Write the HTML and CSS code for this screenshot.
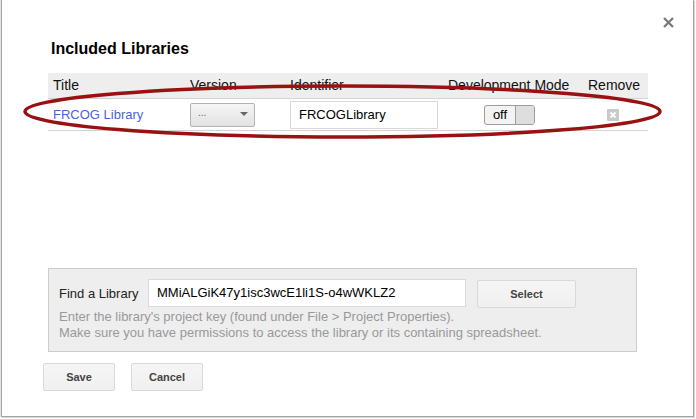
FILE: index.html
```html
<!DOCTYPE html>
<html>
<head>
<meta charset="utf-8">
<link rel="stylesheet" href="styles.css">
</head>
<body>
<div class="dialog">
  <button class="close" aria-label="Close">
    <svg width="11" height="11" viewBox="0 0 11 11"><path d="M1 1L10 10M10 1L1 10" stroke="#777" stroke-width="2.2" fill="none"/></svg>
  </button>
  <div class="content">
    <h2 class="heading">Included Libraries</h2>
    <div class="table">
      <div class="thead">
        <div class="cell first">Title</div>
        <div class="cell">Version</div>
        <div class="cell">Identifier</div>
        <div class="cell">Development Mode</div>
        <div class="cell">Remove</div>
      </div>
      <div class="trow">
        <div class="cell first"><a class="link" href="#">FRCOG Library</a></div>
        <div class="cell">
          <div class="select"><span class="dots">...</span><span class="arrow"></span></div>
        </div>
        <div class="cell"><div class="ident">FRCOGLibrary</div></div>
        <div class="cell devcell">
          <div class="toggle"><span class="off">off</span><span class="knob"></span></div>
        </div>
        <div class="cell remcell">
          <span class="remove"><svg width="12" height="12" viewBox="0 0 12 12"><rect width="12" height="12" rx="1" fill="#c9c9c9"/><path d="M3.5 3.5L8.5 8.5M8.5 3.5L3.5 8.5" stroke="#fff" stroke-width="2" fill="none"/></svg></span>
        </div>
      </div>
    </div>
    <div class="find">
      <div class="find-row">
        <span class="find-label">Find a Library</span>
        <div class="key">MMiALGiK47y1isc3wcE1li1S-o4wWKLZ2</div>
        <button class="btn select-btn">Select</button>
      </div>
      <div class="help">Enter the library's project key (found under File &gt; Project Properties).<br>Make sure you have permissions to access the library or its containing spreadsheet.</div>
    </div>
    <div class="actions">
      <button class="btn">Save</button>
      <button class="btn">Cancel</button>
    </div>
  </div>
</div>
<svg class="mark" width="696" height="160" viewBox="0 0 696 160">
  <ellipse cx="342.5" cy="111.5" rx="317.5" ry="25.5" fill="none" stroke="#991111" stroke-width="3.5"/>
</svg>
</body>
</html>
```

FILE: styles.css
```css
html, body {
  margin: 0;
  padding: 0;
  background: #ffffff;
}
body {
  position: relative;
  width: 696px;
  height: 419px;
  overflow: hidden;
  font-family: "Liberation Sans", Arial, sans-serif;
  color: #000;
}
.dialog {
  position: relative;
  margin-left: 1px;
  width: 691px;
  height: 416px;
  border: 1px solid #a3a3a3;
  border-top: 0;
  box-shadow: 1px 1px 0 #d8d8d8, -1px 0 0 #e4e4e4;
  background: #fff;
}
.close {
  position: absolute;
  top: 17px;
  right: 19px;
  width: 11px;
  height: 11px;
  padding: 0;
  border: 0;
  background: none;
  display: block;
}
.close svg { display: block; }
.content {
  padding: 39px 0 0 46px;
}
.heading {
  margin: 0 0 14px 3px;
  font-size: 16px;
  line-height: 20px;
  font-weight: bold;
  color: #000;
}
.table {
  width: 600px;
}
.thead, .trow {
  display: grid;
  grid-template-columns: 142px 100px 158px 140px 60px;
}
.thead {
  height: 25px;
  background: #eeeeee;
  border-bottom: 1px solid #d4d4d4;
  font-size: 14px;
  line-height: 25px;
  color: #111;
}
.trow {
  height: 31px;
  border-bottom: 1px solid #d4d4d4;
  align-items: center;
}
.first {
  padding-left: 5px;
}
.link {
  font-size: 13px;
  color: #4b5fdc;
  text-decoration: none;
  position: relative;
  top: -1px;
}
.select {
  box-sizing: border-box;
  width: 65px;
  height: 24px;
  border: 1px solid #b3b3b3;
  border-radius: 2px;
  background: linear-gradient(#f5f5f5, #e2e2e2);
  display: flex;
  align-items: center;
  justify-content: space-between;
  padding: 0 6px 0 7px;
}
.dots {
  font-size: 10px;
  color: #666;
  position: relative;
  top: -2px;
}
.arrow {
  width: 0;
  height: 0;
  border-left: 4px solid transparent;
  border-right: 4px solid transparent;
  border-top: 4px solid #666;
  margin-top: -2px;
}
.ident {
  box-sizing: border-box;
  width: 148px;
  height: 28px;
  border: 1px solid #d9d9d9;
  padding-left: 8px;
  font-size: 13px;
  line-height: 26px;
  color: #000;
}
.devcell {
  padding-left: 36px;
}
.toggle {
  box-sizing: border-box;
  width: 51px;
  height: 20px;
  border: 1px solid #9d9d9d;
  border-radius: 3px;
  display: flex;
  overflow: hidden;
  background: #f3f3f3;
}
.off {
  width: 30px;
  font-size: 13px;
  line-height: 18px;
  text-align: center;
  color: #000;
}
.knob {
  flex: 1;
  background: #dedede;
  border-left: 1px solid #9d9d9d;
}
.remcell {
  padding-left: 19px;
  display: flex;
}
.remove svg { display: block; }
.find {
  box-sizing: border-box;
  margin-top: 137px;
  width: 589px;
  height: 84px;
  border: 1px solid #cccccc;
  background: #eeeeee;
  padding: 10px 10px 0 10px;
}
.find-row {
  display: flex;
  align-items: center;
  height: 28px;
}
.find-label {
  font-size: 13px;
  color: #222;
  width: 89px;
}
.key {
  box-sizing: border-box;
  width: 318px;
  height: 28px;
  background: #fff;
  border: 1px solid #d9d9d9;
  padding-left: 8px;
  font-size: 13px;
  line-height: 26px;
  color: #000;
}
.btn {
  box-sizing: border-box;
  width: 72px;
  height: 28px;
  border: 1px solid #d9d9d9;
  border-radius: 2px;
  background: linear-gradient(#f5f5f5, #f0f0f0);
  font-family: "Liberation Sans", Arial, sans-serif;
  font-weight: bold;
  font-size: 11px;
  color: #444;
  padding: 0;
}
.select-btn {
  width: 99px;
  margin-left: 11px;
  position: relative;
  top: 1px;
}
.help {
  margin-top: 2px;
  font-size: 13px;
  line-height: 16px;
  color: #999;
}
.actions {
  display: flex;
  gap: 16px;
  margin: 11px 0 0 -5px;
}
.mark {
  position: absolute;
  left: 0;
  top: 0;
  pointer-events: none;
}
```
